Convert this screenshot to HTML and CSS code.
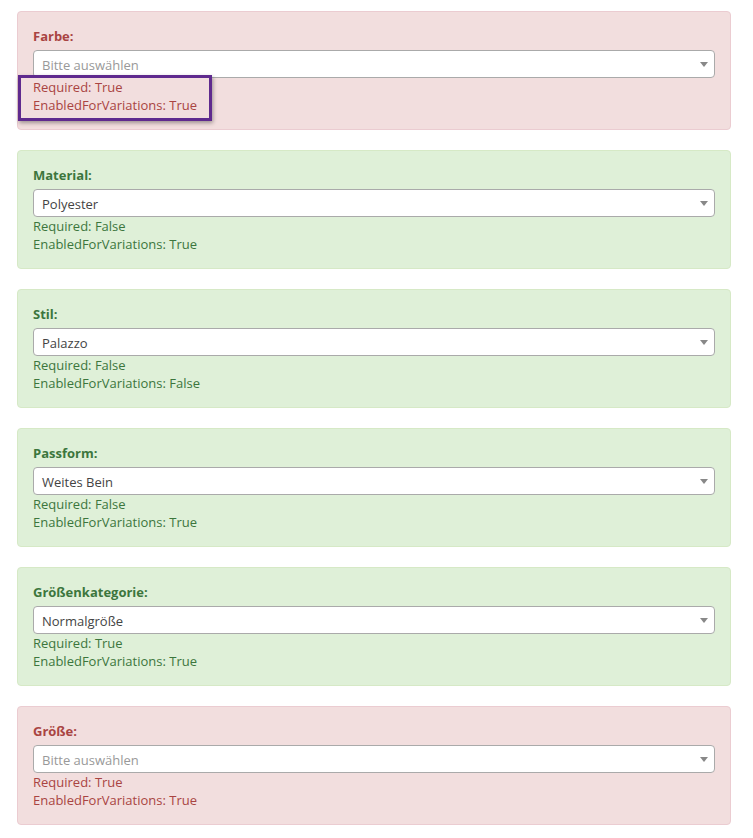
FILE: index.html
```html
<!DOCTYPE html>
<html lang="de">
<head>
    <meta charset="UTF-8">
    <meta name="viewport" content="width=device-width, initial-scale=1.0">
    <title>Merkmale</title>
    <link rel="stylesheet" href="styles.css">
</head>
<body>
    <div class="page">
        <div class="alert alert-danger marked">
            <label>Farbe:</label>
            <div class="select empty"><span>Bitte auswählen</span><b></b></div>
            <div class="info">Required: True</div>
            <div class="info">EnabledForVariations: True</div>
            <div class="highlight"></div>
        </div>

        <div class="alert alert-success">
            <label>Material:</label>
            <div class="select"><span>Polyester</span><b></b></div>
            <div class="info">Required: False</div>
            <div class="info">EnabledForVariations: True</div>
        </div>

        <div class="alert alert-success">
            <label>Stil:</label>
            <div class="select"><span>Palazzo</span><b></b></div>
            <div class="info">Required: False</div>
            <div class="info">EnabledForVariations: False</div>
        </div>

        <div class="alert alert-success">
            <label>Passform:</label>
            <div class="select"><span>Weites Bein</span><b></b></div>
            <div class="info">Required: False</div>
            <div class="info">EnabledForVariations: True</div>
        </div>

        <div class="alert alert-success">
            <label>Größenkategorie:</label>
            <div class="select"><span>Normalgröße</span><b></b></div>
            <div class="info">Required: True</div>
            <div class="info">EnabledForVariations: True</div>
        </div>

        <div class="alert alert-danger">
            <label>Größe:</label>
            <div class="select empty"><span>Bitte auswählen</span><b></b></div>
            <div class="info">Required: True</div>
            <div class="info">EnabledForVariations: True</div>
        </div>
    </div>
</body>
</html>
```

FILE: styles.css
```css
body {
    font-family: "Open Sans", "Liberation Sans", sans-serif;
    font-size: 13px;
    line-height: 18px;
    margin: 0;
    padding: 0;
    background: #fff;
    color: #333;
}
.page {
    padding: 11px 22px 0 17px;
}
.alert {
    position: relative;
    padding: 15px;
    margin-bottom: 20px;
    border: 1px solid transparent;
    border-radius: 4px;
}
.alert-danger {
    background-color: #f2dede;
    border-color: #ebccd1;
    color: #a94442;
}
.alert-success {
    background-color: #dff0d8;
    border-color: #d6e9c6;
    color: #3c763d;
}
.alert label {
    display: block;
    font-weight: bold;
    margin-bottom: 5px;
}
.select {
    display: flex;
    align-items: center;
    height: 26px;
    padding: 0 6px 0 8px;
    background: #fff;
    border: 1px solid #aaa;
    border-radius: 4px;
    color: #444;
}
.select span {
    flex: 1;
    padding-top: 2px;
}
.select.empty span {
    color: #999;
}
.select b {
    width: 0;
    height: 0;
    border-style: solid;
    border-width: 5px 4px 0 4px;
    border-color: #888 transparent transparent transparent;
}
.info {
    line-height: 18px;
}
.highlight {
    position: absolute;
    left: 0;
    top: 63px;
    width: 188px;
    height: 40px;
    border: 3px solid #5f2a8e;
    box-shadow: 1px 2px 4px rgba(0, 0, 0, 0.35);
}
```
